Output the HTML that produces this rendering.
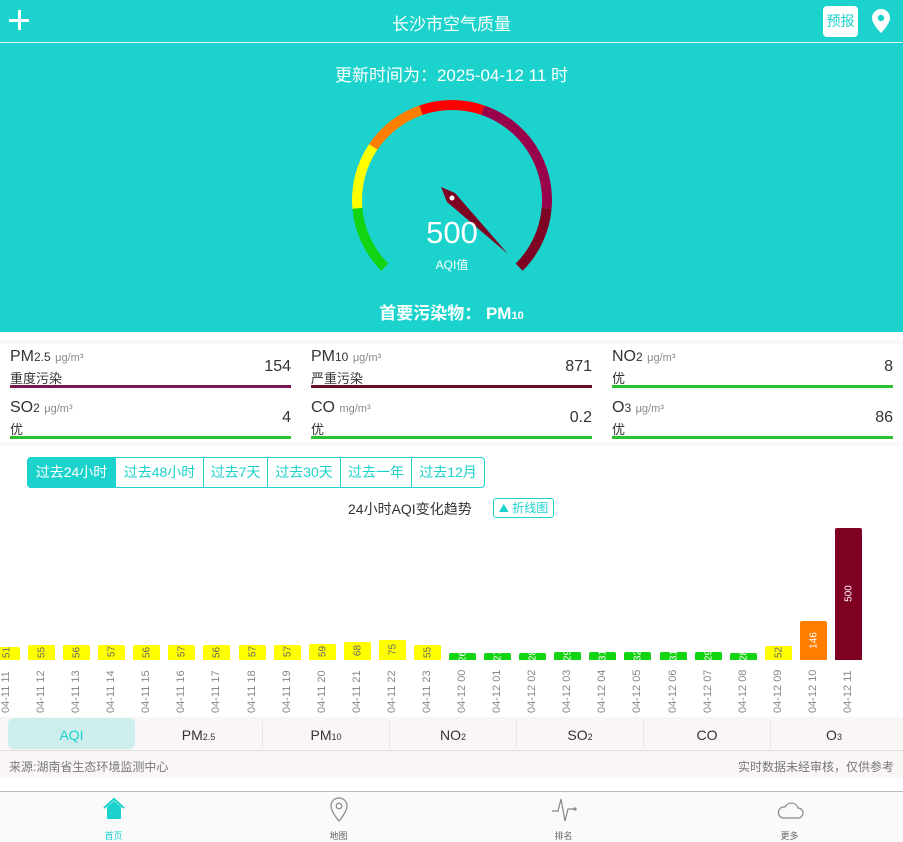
<!DOCTYPE html>
<html><head><meta charset="utf-8">
<style>
*{margin:0;padding:0;box-sizing:border-box}
body{width:903px;height:842px;position:relative;overflow:hidden;background:#fff;font-family:"Liberation Sans","Noto Sans CJK SC",sans-serif;color:#333}
.a{position:absolute}
.teal{background:#1bd3cc}
.card .n{font-size:16px;color:#333;position:absolute;left:0;top:0;white-space:nowrap}
.card .n small{font-size:12px}
.card .n i{font-style:normal;font-size:11px;color:#888}
.card .s{position:absolute;left:0;top:20px;font-size:13px;color:#333}
.card .v{position:absolute;right:0;top:10px;font-size:16px}
.card .b{position:absolute;left:0;right:0;top:37px;height:3px}
.tab{position:absolute;top:457px;height:31px;border:1px solid #1bd3cc;color:#1bd3cc;font-size:14px;line-height:29px;text-align:center;background:#fff}
.lbl{position:absolute;font-size:11px;color:#888;transform:rotate(-90deg);transform-origin:left top;white-space:nowrap}
.bar{position:absolute;border-radius:2px 2px 0 0}
.bv{position:absolute;font-size:10px;transform:rotate(-90deg);white-space:nowrap}
.pt{position:absolute;top:722px;height:26px;line-height:26px;font-size:14px;text-align:center;color:#333}
.pt sub{font-size:9px;vertical-align:baseline}
.nav{position:absolute;top:792px;width:225px;text-align:center;font-size:9px;color:#666}
</style></head><body>
<div class="a teal" style="left:0;top:0;width:903px;height:332px"></div>
<div class="a" style="left:0;top:42px;width:903px;height:1px;background:#d6f7f5"></div>
<div class="a" style="left:9px;top:10px;width:20px;height:20px">
 <div class="a" style="left:0;top:8.5px;width:20px;height:3px;background:#fff"></div>
 <div class="a" style="left:8.5px;top:0;width:3px;height:20px;background:#fff"></div></div>
<div class="a" style="left:0;top:10px;width:903px;text-align:center;color:#fff;font-size:17px">长沙市空气质量</div>
<div class="a" style="left:823px;top:6px;width:35px;height:31px;background:#fff;border-radius:4px;color:#1bd3cc;font-size:14px;line-height:31px;text-align:center">预报</div>
<svg class="a" style="left:870px;top:8px" width="22" height="26" viewBox="0 0 22 26"><path d="M11 1C6 1 2 5 2 10c0 6 9 15 9 15s9-9 9-15c0-5-4-9-9-9z" fill="#fff"/><circle cx="11" cy="10" r="3.2" fill="#1bd3cc"/></svg>
<div class="a" style="left:0;top:61px;width:903px;text-align:center;color:#fff;font-size:17px">更新时间为：2025-04-12 11 时</div>
<svg class="a" style="left:0;top:0" width="903" height="332" id="g"></svg>
<div class="a" style="left:352px;top:215px;width:200px;text-align:center;color:#fff;font-size:31px">500</div>
<div class="a" style="left:352px;top:256px;width:200px;text-align:center;color:#fff;font-size:12px">AQI值</div>
<div class="a" style="left:0;top:299px;width:903px;text-align:center;color:#fff;font-size:17px;font-weight:bold">首要污染物： PM<span style="font-size:11px">10</span></div>

<div class="a" style="left:0;top:340px;width:903px;height:106px;background:#faf7f7"></div>
<div class="a" style="left:0;top:344px;width:903px;height:98px;background:#fff"></div>
<div id="cards"></div>

<div class="tab" style="left:27px;width:89px;background:#1bd3cc;color:#fff;border-radius:4px 0 0 4px">过去24小时</div>
<div class="tab" style="left:115px;width:89px">过去48小时</div>
<div class="tab" style="left:203px;width:65px">过去7天</div>
<div class="tab" style="left:267px;width:74px">过去30天</div>
<div class="tab" style="left:340px;width:72px">过去一年</div>
<div class="tab" style="left:411px;width:74px;border-radius:0 4px 4px 0">过去12月</div>

<div class="a" style="left:348px;top:499px;font-size:14px;color:#333">24小时AQI变化趋势</div>
<div class="a" style="left:493px;top:498px;width:61px;height:20px;border:1px solid #1bd3cc;border-radius:3px;color:#1bd3cc;font-size:12px;line-height:18px;text-align:center">⛰ 折线图</div>
<div id="chart"></div>

<div class="a" style="left:0;top:717px;width:903px;height:33px;background:#faf6f6"></div>
<div class="a" style="left:8px;top:718px;width:127px;height:31px;background:#cdeeed;border-radius:6px"></div>
<div class="pt" style="left:8px;width:127px;color:#1bd3cc">AQI</div>
<div class="pt" style="left:135px;width:127px">PM<sub>2.5</sub></div>
<div class="pt" style="left:262px;width:127px;border-left:1px solid #e5e5e5">PM<sub>10</sub></div>
<div class="pt" style="left:389px;width:127px;border-left:1px solid #e5e5e5">NO<sub>2</sub></div>
<div class="pt" style="left:516px;width:127px;border-left:1px solid #e5e5e5">SO<sub>2</sub></div>
<div class="pt" style="left:643px;width:127px;border-left:1px solid #e5e5e5">CO</div>
<div class="pt" style="left:770px;width:127px;border-left:1px solid #e5e5e5">O<sub>3</sub></div>
<div class="a" style="left:0;top:750px;width:903px;height:1px;background:#ddd"></div>
<div class="a" style="left:0;top:751px;width:903px;height:27px;background:#faf6f6"></div>
<div class="a" style="left:9px;top:758px;font-size:12px;color:#777">来源:湖南省生态环境监测中心</div>
<div class="a" style="right:9px;top:758px;font-size:12px;color:#777">实时数据未经审核，仅供参考</div>
<div class="a" style="left:0;top:791px;width:903px;height:1px;background:#bbb"></div>
<div class="a" style="left:0;top:792px;width:903px;height:50px;background:#fafafa"></div>
<svg class="a" style="left:102px;top:797px" width="24" height="24" viewBox="0 0 24 24"><path d="M2 11L12 2l10 9" fill="none" stroke="#1bd3cc" stroke-width="2"/><path d="M5 10l7-6 7 6v12H5z" fill="#1bd3cc"/></svg>
<svg class="a" style="left:329px;top:797px" width="20" height="26" viewBox="0 0 20 26"><path d="M10 1C5 1 2 5 2 9c0 6 8 15 8 15s8-9 8-15c0-4-3-8-8-8z" fill="none" stroke="#888" stroke-width="1.2"/><circle cx="10" cy="9" r="2.8" fill="none" stroke="#888" stroke-width="1.2"/></svg>
<svg class="a" style="left:551px;top:797px" width="28" height="26" viewBox="0 0 28 26"><path d="M1 14h6l3-12 4 22 3-12h6" fill="none" stroke="#888" stroke-width="1.2"/><circle cx="24" cy="12" r="1.6" fill="#888"/></svg>
<svg class="a" style="left:776px;top:800px" width="28" height="20" viewBox="0 0 28 20"><path d="M7 18h15a5 5 0 0 0 0-10 7 7 0 0 0-13-1A5.5 5.5 0 0 0 7 18z" fill="none" stroke="#888" stroke-width="1.2"/></svg>
<div class="nav" style="left:1px;top:829px;color:#1bd3cc">首页</div>
<div class="nav" style="left:226px;top:829px">地图</div>
<div class="nav" style="left:451px;top:829px">排名</div>
<div class="nav" style="left:677px;top:829px">更多</div>

<script>
(function(){
var g=document.getElementById('g'),cx=452,cy=200,r=95,s='';
function p(a){a=a*Math.PI/180;return [cx+r*Math.cos(a),cy-r*Math.sin(a)];}
[[225,185,'#12d412'],[185,146,'#ffff00'],[146,109,'#ff7e00'],[109,71,'#ff0000'],[71,-5,'#99004c'],[-5,-45,'#7e0023']].forEach(function(q){
var a=p(q[0]),b=p(q[1]);s+='<path d="M'+a[0]+' '+a[1]+'A'+r+' '+r+' 0 0 1 '+b[0]+' '+b[1]+'" fill="none" stroke="'+q[2]+'" stroke-width="10"/>';});
s+='<path d="M441 187L455 193L508 254L447 202Z" fill="#7e0023"/><circle cx="452" cy="198" r="2.5" fill="#fff"/>';
g.innerHTML=s;
var cards=[[10,362,'PM<small>2.5</small> <i>μg/m³</i>','重度污染','154','#7a1650'],[311,362,'PM<small>10</small> <i>μg/m³</i>','严重污染','871','#6a0f26'],[612,362,'NO<small>2</small> <i>μg/m³</i>','优','8','#2ec12e'],
[10,413,'SO<small>2</small> <i>μg/m³</i>','优','4','#2ec12e'],[311,413,'CO <i>mg/m³</i>','优','0.2','#2ec12e'],[612,413,'O<small>3</small> <i>μg/m³</i>','优','86','#2ec12e']];
var h='';cards.forEach(function(c){h+='<div class="a card" style="left:'+c[0]+'px;top:'+(c[1]-14)+'px;width:281px;height:42px"><div class="n">'+c[2]+'</div><div class="s">'+c[3]+'</div><div class="v">'+c[4]+'</div><div class="b" style="background:'+c[5]+'"></div></div>';});
document.getElementById('cards').innerHTML=h;
var v=[51,55,56,57,56,57,56,57,57,59,68,75,55,26,27,28,29,31,32,31,29,28,52,146,500];
var labels=[];for(var i=11;i<=23;i++)labels.push('04-11 '+i);for(i=0;i<=11;i++)labels.push('04-12 '+(i<10?'0'+i:i));
var o='';for(i=0;i<25;i++){var c=7+35.08*i,ht=Math.max(v[i]*0.264,7),col=v[i]<=50?'#12d412':v[i]<=100?'#ffff00':v[i]<=150?'#ff7e00':'#7e0023',tc=v[i]<=50?'#fff':v[i]<=100?'#666':'#fff';
o+='<div class="bar" style="left:'+(c-14)+'px;top:'+(660-ht)+'px;width:27px;height:'+ht+'px;background:'+col+'"></div>';
o+='<div class="bv" style="left:'+(c-15)+'px;top:'+(660-ht/2-6)+'px;width:30px;text-align:center;color:'+tc+'">'+v[i]+'</div>';
o+='<div class="lbl" style="left:'+(c-7)+'px;top:713px">'+labels[i]+'</div>';}
document.getElementById('chart').innerHTML=o;
})();
</script>
</body></html>
